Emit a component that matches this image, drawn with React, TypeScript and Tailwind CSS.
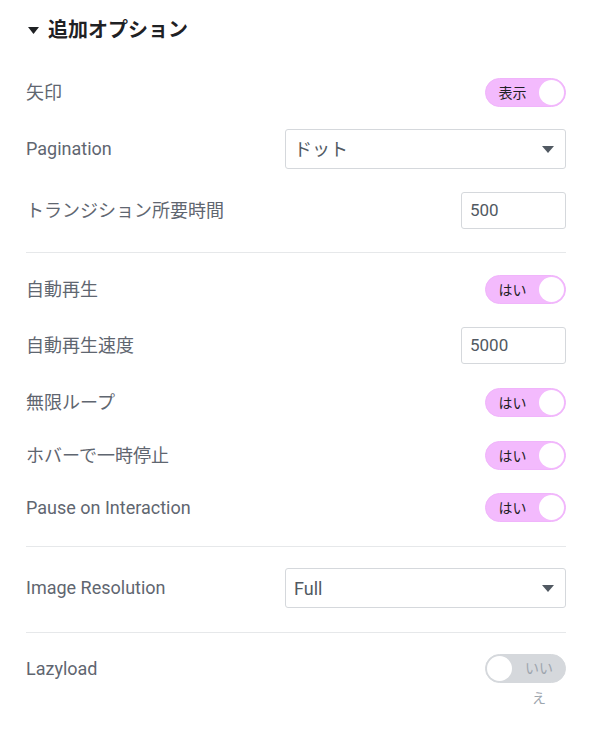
import React from "react";

const font = { fontFamily: "Roboto, 'Noto Sans CJK JP', sans-serif" };

function Toggle({ on, label }: { on: boolean; label: string }) {
  if (on) {
    return (
      <div className="relative flex h-[29px] w-[81px] items-center rounded-full border border-[#f0b4fb] bg-[#f3bafd]">
        <span className="flex-1 text-center text-[14px] leading-none text-[#1f2124]">{label}</span>
        <span className="mr-[1px] h-[25px] w-[25px] rounded-full bg-white" />
      </div>
    );
  }
  return (
    <div className="relative flex h-[29px] w-[81px] items-start rounded-full border border-[#d5d8dc] bg-[#d5d8dc]">
      <span className="ml-[1px] mt-[1px] h-[25px] w-[25px] rounded-full bg-white" />
      <span className="absolute left-[38px] top-[-2px] w-[30px] text-center text-[14px] leading-[30px] text-[#9da5ae]">
        {label}
      </span>
    </div>
  );
}

function Caret() {
  return (
    <svg width="12" height="7" viewBox="0 0 12 7">
      <path d="M0 0h12L6 7z" fill="#515962" />
    </svg>
  );
}

function Row({ label, children, className = "" }: { label: string; children: React.ReactNode; className?: string }) {
  return (
    <div className={`flex items-center justify-between ${className}`}>
      <span className="text-[18px] leading-none text-[#5f6670]">{label}</span>
      {children}
    </div>
  );
}

function Select({ value }: { value: string }) {
  return (
    <div className="flex h-[40px] w-[281px] items-center justify-between rounded-[3px] border border-[#d5d8dc] pl-[8px] pr-[11px]">
      <span className="text-[18px] text-[#515962]">{value}</span>
      <Caret />
    </div>
  );
}

function NumInput({ value }: { value: string }) {
  return (
    <div className="flex h-[37px] w-[105px] items-center rounded-[3px] border border-[#d5d8dc] pl-[8px]">
      <span className="text-[17px] text-[#515962]">{value}</span>
    </div>
  );
}

const Divider = ({ className = "" }: { className?: string }) => <div className={`h-px bg-[#e6e8ea] ${className}`} />;

export default function App() {
  return (
    <div className="min-h-screen bg-white pl-[26px] pr-[23px]" style={font}>
      <div className="flex items-center pt-[18px]">
        <svg width="11" height="7" viewBox="0 0 11 7" className="ml-[2px]">
          <path d="M0 0h11L5.5 7z" fill="#1f2124" />
        </svg>
        <span className="ml-[9px] text-[20px] font-bold leading-[24px] text-[#1f2124]">追加オプション</span>
      </div>

      <Row label="矢印" className="mt-[36px]">
        <Toggle on label="表示" />
      </Row>
      <Row label="Pagination" className="mt-[22px]">
        <Select value="ドット" />
      </Row>
      <Row label="トランジション所要時間" className="mt-[23px]">
        <NumInput value="500" />
      </Row>

      <Divider className="mt-[23px]" />

      <Row label="自動再生" className="mt-[22px]">
        <Toggle on label="はい" />
      </Row>
      <Row label="自動再生速度" className="mt-[23px]">
        <NumInput value="5000" />
      </Row>
      <Row label="無限ループ" className="mt-[24px]">
        <Toggle on label="はい" />
      </Row>
      <Row label="ホバーで一時停止" className="mt-[24px]">
        <Toggle on label="はい" />
      </Row>
      <Row label="Pause on Interaction" className="mt-[23px]">
        <Toggle on label="はい" />
      </Row>

      <Divider className="mt-[24px]" />

      <Row label="Image Resolution" className="mt-[21px]">
        <Select value="Full" />
      </Row>

      <Divider className="mt-[24px]" />

      <Row label="Lazyload" className="mt-[21px]">
        <Toggle on={false} label="いいえ" />
      </Row>
    </div>
  );
}
